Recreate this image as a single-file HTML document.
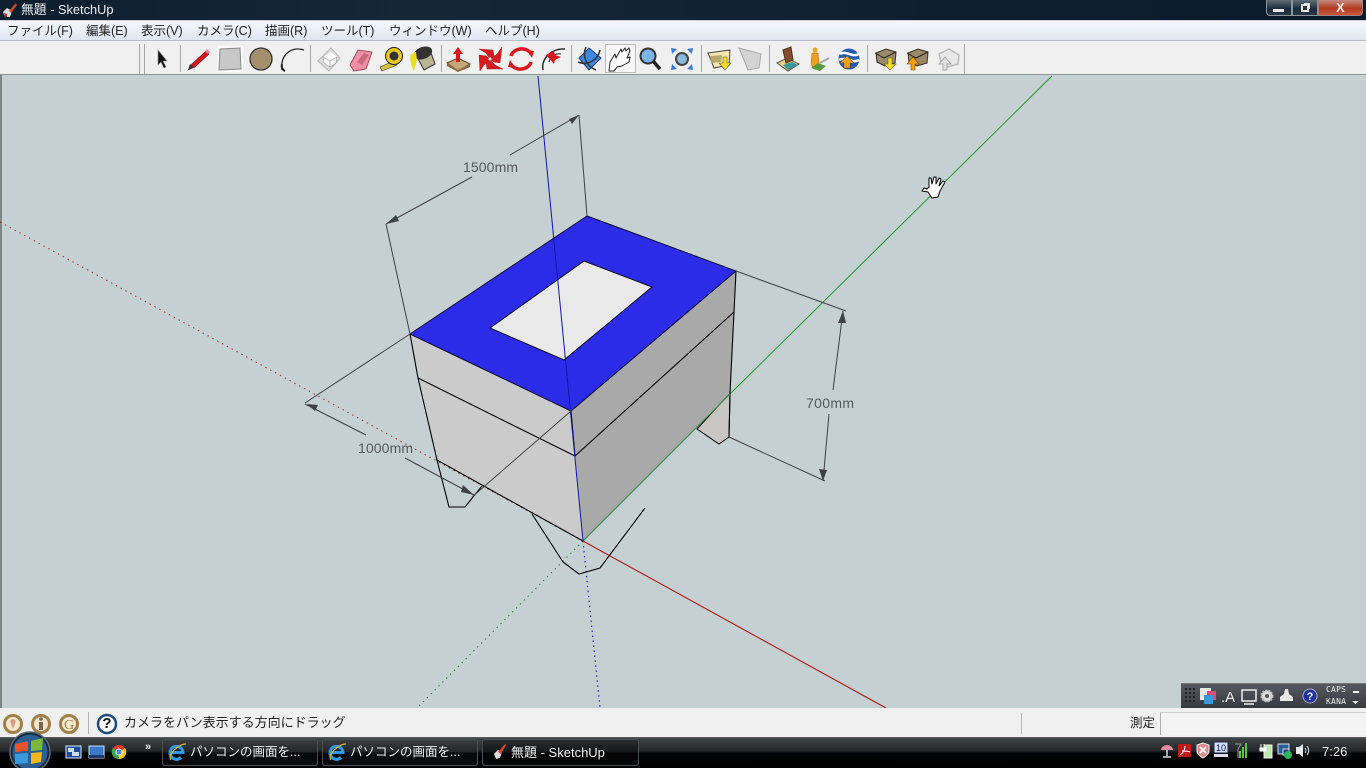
<!DOCTYPE html>
<html lang="ja"><head><meta charset="utf-8"><title>無題 - SketchUp</title>
<style>
html,body{margin:0;padding:0;width:1366px;height:768px;overflow:hidden;background:#c4d0d2}
body{position:relative;font-family:"Liberation Sans","Noto Sans CJK JP",sans-serif}
.a{position:absolute;white-space:nowrap}
#title{left:0;top:0;width:1366px;height:20px;background:linear-gradient(90deg,#0d1e2e,#14283a 30%,#0f2132 60%,#0c1b2a)}
#menu{left:0;top:20px;width:1366px;height:21px;background:linear-gradient(#f4f7fc,#dfe6f2);border-top:1px solid #c9d0d8;box-sizing:border-box;border-bottom:1px solid #b9bcc0}
#tb{left:0;top:41px;width:1366px;height:34px;background:#f0f0f0;border-bottom:1px solid #8f9494;box-sizing:border-box}
.m{top:23px;font-size:12.5px;line-height:16px;color:#222}
#status{left:0;top:708px;width:1366px;height:29px;background:#f0f0f0}
#task{left:0;top:737px;width:1366px;height:31px;background:linear-gradient(#5e6468 0,#3c4144 6%,#24282a 45%,#030405 52%,#000 100%)}
.btn{top:739px;width:156px;height:27px;box-sizing:border-box;border:1px solid #4a4f52;border-radius:3px;background:linear-gradient(#3a3e40,#232628 48%,#08090a 52%,#0b0c0d);color:#f2f2f2;font-size:12.5px;line-height:25px;padding-left:27px}
svg{position:absolute;overflow:visible}
.dim{font:14px "Liberation Sans",sans-serif;fill:#555a5e}
</style></head><body>

<!-- drawing -->
<svg class="a" style="left:0;top:0" width="1366" height="768" viewBox="0 0 1366 768">
<rect x="0" y="75" width="1366" height="633" fill="#c4d0d2"/>
<rect x="0" y="75" width="2" height="633" fill="#7d8585"/>
<!-- dotted axes -->
<path d="M0 222L583 541" stroke="#a02a2a" stroke-width="1" stroke-dasharray="1.5 4" fill="none"/>
<path d="M583 541L417 708" stroke="#2f7a3a" stroke-width="1" stroke-dasharray="1.5 4" fill="none"/>
<path d="M583 541L600 708" stroke="#2222c0" stroke-width="1.2" stroke-dasharray="1.5 3.5" fill="none"/>
<!-- solid axes -->
<path d="M583 541L886 708" stroke="#b01818" stroke-width="1.1" fill="none"/>
<path d="M730 394L1052 76" stroke="#1f9a2c" stroke-width="1" fill="none"/>
<!-- right foot -->
<path d="M697 429L719 444L729 437L730 393Z" fill="#c8c5c3" stroke="#000" stroke-width="1"/>
<!-- faces -->
<path d="M410 334L571 411L583 541L437 460Z" fill="#cbcbcb"/>
<path d="M571 411L736 271L730 393L583 541Z" fill="#a9a9a9"/>
<path d="M587 216L736 271L571 411L410 334Z" fill="#2c2ce8" stroke="#0a0a30" stroke-width="1"/>
<path d="M584 261L652 287L564 360L490 328Z" fill="#e9e9e9" stroke="#0a0a20" stroke-width="1"/>
<!-- edges -->
<g fill="none" stroke="#000" stroke-width="1.1">
<path d="M410 334L418 378L437 460L449 507L465 507L482 486"/>
<path d="M437 460L583 541"/>
<path d="M418 378L575 456L734 312"/>
<path d="M736 271L734 312L730 393L729 437"/>
<path d="M532 514L563 562L579 574L600 568L645 508"/>
<path d="M571 411L575 456"/>
</g>
<path d="M583 541L730 394" stroke="#3f8a4a" stroke-width="1.2" fill="none"/>
<!-- blue axis -->
<path d="M538 76L583 541" stroke="#1414b0" stroke-width="1" fill="none"/>
<!-- dimensions -->
<g fill="none" stroke="#3c4144" stroke-width="1">
<path d="M579 115L587 216"/><path d="M386 224L410 334"/>
<path d="M386 224L472 177M510 155L579 115"/>
<path d="M410 334L305 403"/>
<path d="M305 404L366 435M405 458L474 495"/>
<path d="M472 497L571 411"/>
<path d="M736 271L846 311"/><path d="M729 437L825 481"/>
<path d="M843 311L833 390M829 414L823 481"/>
</g>
<g fill="#3c4144">
<path d="M386 224L396 215L399 221Z"/><path d="M579 115L569 119L572 124Z"/>
<path d="M307 404L318 405L315 411Z"/><path d="M474 495L463 485L461 492Z"/>
<path d="M843 311L838 323L846 323Z"/><path d="M823 481L819 469L827 470Z"/>
</g>
<text class="dim" x="463" y="172" textLength="55">1500mm</text>
<text class="dim" x="358" y="453" textLength="55">1000mm</text>
<text class="dim" x="806" y="408" textLength="48">700mm</text>
<!-- hand cursor -->
<path d="M922 191l6 1 4 6 6-1 2-6 5-9-2-1-4 5 2-7-2-1-3 6 0-7-2 0-2 7-1-6-2 0 0 9-2 2-3-1Z" fill="#fff" stroke="#000" stroke-width="1" stroke-linejoin="round"/>
</svg>

<!-- title bar -->
<div id="title" class="a"></div>
<svg class="a" style="left:2px;top:2px" width="16" height="16" viewBox="0 0 16 16"><path d="M1 10l4-4 5 3-2 6-5 0Z" fill="#ddd"/><path d="M7 9L14 1l1 2-6 8Z" fill="#d8452a"/><path d="M2 11l3 1 0 3-2 0Z" fill="#a33"/></svg>
<div class="a" style="left:21px;top:2px;font-size:12.8px;line-height:16px;color:#eef2f6">無題 - SketchUp</div>
<div class="a" style="left:1266px;top:0;width:26px;height:16px;box-sizing:border-box;border:1px solid #8a949c;border-top:0;border-radius:0 0 0 4px;background:linear-gradient(#5f6d78,#1a2a38 60%,#2a3a48)"></div>
<div class="a" style="left:1273px;top:9px;width:11px;height:3px;background:#e8e8e8"></div>
<div class="a" style="left:1292px;top:0;width:26px;height:16px;box-sizing:border-box;border:1px solid #8a949c;border-top:0;background:linear-gradient(#5f6d78,#1a2a38 60%,#2a3a48)"></div>
<div class="a" style="left:1301px;top:4px;width:8px;height:8px;box-sizing:border-box;border:2px solid #eee;box-shadow:2px -2px 0 -1px #ddd"></div>
<div class="a" style="left:1318px;top:0;width:45px;height:16px;box-sizing:border-box;border:1px solid #a08080;border-top:0;border-radius:0 0 4px 0;background:linear-gradient(#c28a80,#b33a20 55%,#c85a40)"></div>
<div class="a" style="left:1336px;top:1px;font:bold 13px/14px 'Liberation Sans',sans-serif;color:#f0f0f0">X</div>

<!-- menu -->
<div id="menu" class="a"></div>
<div class="a m" style="left:7px">ファイル(F)</div>
<div class="a m" style="left:86px">編集(E)</div>
<div class="a m" style="left:141px">表示(V)</div>
<div class="a m" style="left:197px">カメラ(C)</div>
<div class="a m" style="left:265px">描画(R)</div>
<div class="a m" style="left:321px">ツール(T)</div>
<div class="a m" style="left:389px">ウィンドウ(W)</div>
<div class="a m" style="left:485px">ヘルプ(H)</div>

<!-- toolbar -->
<div id="tb" class="a"></div>
<svg class="a" style="left:0;top:41px" width="1000" height="34" viewBox="0 41 1000 34">
<g stroke="#a8a8a8" stroke-width="1" fill="none">
<path d="M139.500 44V74M144.500 44V74M180.500 45V72M310.500 45V72M441.500 45V72M571.500 45V72M701.500 45V72M769.500 45V72M867.500 45V72M964.500 44V74"/>
</g>
<!-- arrow -->
<path d="M158 50v15l3-3 3 6 2-1-3-6h4Z" fill="#111" stroke="#888" stroke-width=".6"/>
<!-- pencil -->
<path d="M188 70l4-6 14-13 3 3-14 13Z" fill="#d8141c" stroke="#611" stroke-width=".6"/><path d="M205 51l2-2 3 3-2 2Z" fill="#e880a0"/><path d="M188 70l2-6 4 3Z" fill="#333"/>
<!-- rect -->
<rect x="217" y="46" width="26" height="26" fill="#fafafa"/><path d="M220 49L240 48 241 69 219 70Z" fill="#c8c8c8" stroke="#888"/>
<!-- circle -->
<circle cx="261" cy="59" r="11" fill="#a68f6d" stroke="#333" stroke-width="1.3"/>
<!-- arc -->
<path d="M304 50C292 46 280 54 282 70" fill="none" stroke="#222" stroke-width="1.3"/><path d="M282 64C281 68 283 70 285 71" fill="none" stroke="#222" stroke-width="2"/>
<!-- box -->
<path d="M318 61L331 48 340 58 329 71Z" fill="#ddd" stroke="#bbb" stroke-width="1.2"/><path d="M323 57L331 52 337 57 330 61Z" fill="#fff"/><path d="M323 57L330 61 330 67 324 63Z" fill="#fff" stroke="#999" stroke-width=".6"/><path d="M330 61L337 57 336 63 330 67Z" fill="#f6f6f6" stroke="#999" stroke-width=".6"/>
<!-- eraser -->
<path d="M350 65L358 50 372 52 366 69 354 71Z" fill="#ef8fa8" stroke="#a05060"/><path d="M357 62L364 53 369 55 362 65Z" fill="#c86a80"/>
<!-- tape -->
<path d="M380 67L396 60 397 65 382 71Z" fill="#d9c23c" stroke="#333" stroke-width=".6"/><circle cx="394" cy="56" r="8.500" fill="#e8c81e" stroke="#222"/><circle cx="394" cy="56" r="4.500" fill="#333"/>
<!-- paint -->
<path d="M416 55L430 50 435 64 424 70Z" fill="#b8b494" stroke="#333"/><ellipse cx="423" cy="53" rx="9" ry="5.500" fill="#333" stroke="#333" transform="rotate(-20 423 53)"/><path d="M411 54C409 60 412 68 414 71L417 60 416 52Z" fill="#e8e020"/>
<!-- push pull -->
<path d="M447 63L458 58 470 64 458 71Z" fill="#c9a878" stroke="#543"/><path d="M447 63V66L458 72 470 67V64L458 70Z" fill="#8a6a40"/><path d="M458 47l-5 7h3v8h4v-8h3Z" fill="#d81818"/>
<!-- move -->
<g fill="#d81a20" stroke="#8a1010" stroke-width=".4"><path d="M490 59L486 53 479 49 493 50 494 56Z"/><path d="M490 59L497 54 502 47 500 63 494 62Z"/><path d="M490 59L495 65 503 69 487 69 486 63Z"/><path d="M490 59L484 65 480 71 479 55 486 56Z"/></g><circle cx="490" cy="59" r="1.500" fill="#f0f0f0"/>
<!-- rotate -->
<path d="M511 56C513 48 527 46 531 54" fill="none" stroke="#d81a20" stroke-width="3.500"/><path d="M531 62C529 70 515 72 511 64" fill="none" stroke="#d81a20" stroke-width="3.500"/><path d="M527 50l7 1-2 7ZM515 68l-7-1 2-7Z" fill="#d81a20"/>
<!-- offset -->
<path d="M543 70C541 58 552 48 565 49" fill="none" stroke="#222" stroke-width="1.400"/><path d="M549 62C550 56 556 53 561 54" fill="none" stroke="#222"/><path d="M546 55l8-4 1 4 6 2-6 3-1 4Z" fill="#d81a20"/>
<!-- orbit -->
<path d="M579 58L589 48 601 58 589 70Z" fill="#3a8ae0" stroke="#1a3a70"/><path d="M578 62C588 66 598 60 600 50" fill="none" stroke="#333" stroke-width="1.500"/><path d="M586 47C582 56 586 66 596 70" fill="none" stroke="#333" stroke-width="1.500"/>
<!-- pan hand active -->
<rect x="605.500" y="44.500" width="30" height="28" fill="#f8f8f8" stroke="#bbb"/>
<path d="M609 71l1-9 5-8 1 4 5-9 1 3 3-4 1 3 3-3 1 3-3 7 3-1-1 5-7 4-5 1-3 4Z" fill="#fff" stroke="#222" stroke-linejoin="round"/>
<!-- zoom -->
<circle cx="648" cy="56" r="7.500" fill="#7ab4e8" stroke="#333" stroke-width="2"/><path d="M653 61L660 69" stroke="#222" stroke-width="3.500"/>
<!-- zoom extents -->
<circle cx="682" cy="59" r="6" fill="#8ab8d8" stroke="#444" stroke-width="2"/><path d="M671 48l6 1-5 5ZM693 48l-6 1 5 5ZM671 70l6-1-5-5ZM693 70l-6-1 5-5Z" fill="#3a7ad0"/>
<!-- prev / next scene -->
<path d="M708 53L730 50 729 65 714 68Z" fill="#f4e8b0" stroke="#444"/><path d="M710 56L722 55 721 62 711 63Z" fill="#b8a870"/><path d="M723 57v6h-4l6 7 6-7h-4v-6Z" fill="#f0e020" stroke="#654" stroke-width=".6"/>
<path d="M739 48L761 54 759 68 748 70Z" fill="#d4d4d4" stroke="#aaa"/>
<!-- warehouse -->
<path d="M777 63L787 58 799 64 788 71Z" fill="#e8d080" stroke="#555"/><path d="M783 50L791 47 793 60 786 63Z" fill="#8a4a30" stroke="#431"/><path d="M783 65L792 62 798 65 788 70Z" fill="#3a9a9a"/>
<!-- 3d warehouse person -->
<ellipse cx="815" cy="50" rx="2.500" ry="2.500" fill="#f0a020"/><path d="M812 53h6l1 10-2 5h-4l-2-5Z" fill="#f0a020" stroke="#a60" stroke-width=".5"/><path d="M811 68L820 71 826 66 818 63Z" fill="#5a9a3a"/><path d="M820 63L829 58" stroke="#aaa" stroke-width="2"/>
<!-- earth -->
<circle cx="849" cy="59" r="10.500" fill="#2a5ab0"/><path d="M840 54C846 50 852 58 859 54M839 60C846 56 852 64 859 60" stroke="#fff" stroke-width="2.500" fill="none"/><path d="M844 68v-5h-4l7-7 7 7h-4v5Z" fill="#f0a010" stroke="#840" stroke-width=".5"/>
<!-- boxes -->
<path d="M876 53L886 49 896 52 895 63 885 66 877 62Z" fill="#9a8a68" stroke="#332"/><path d="M875 53L884 58 896 52" fill="none" stroke="#222"/><path d="M888 58v6h-4l6 6 6-6h-4v-6Z" fill="#f0e020" stroke="#654" stroke-width=".6"/>
<path d="M908 53L918 49 928 52 927 63 917 66 909 62Z" fill="#9a8a68" stroke="#332"/><path d="M907 53L916 58 928 52" fill="none" stroke="#222"/><path d="M911 70v-6h-4l6-7 6 7h-4v6Z" fill="#f0a010" stroke="#840" stroke-width=".6"/>
<path d="M939 54L949 49 959 55 958 64 948 67 941 62Z" fill="#e8e8e8" stroke="#bbb" stroke-width="1.500"/><path d="M943 70v-6h-4l6-7 6 7h-4v6Z" fill="#e0e0e0" stroke="#aaa"/>
</svg>

<!-- floating tray -->
<div class="a" style="left:1181px;top:683px;width:185px;height:26px;background:linear-gradient(#565a60,#34383e);border-top:1px solid #777"></div>
<svg class="a" style="left:1181px;top:683px" width="185" height="26" viewBox="1181 683 185 26">
<g fill="#222"><rect x="1185" y="688" width="2" height="2"/><rect x="1189" y="688" width="2" height="2"/><rect x="1193" y="688" width="2" height="2"/><rect x="1185" y="692" width="2" height="2"/><rect x="1189" y="692" width="2" height="2"/><rect x="1193" y="692" width="2" height="2"/><rect x="1185" y="696" width="2" height="2"/><rect x="1189" y="696" width="2" height="2"/><rect x="1193" y="696" width="2" height="2"/><rect x="1185" y="700" width="2" height="2"/><rect x="1189" y="700" width="2" height="2"/><rect x="1193" y="700" width="2" height="2"/></g>
<rect x="1200" y="688" width="11" height="12" fill="#e8e8e8"/><rect x="1207" y="691" width="9" height="9" fill="#e04a80"/><rect x="1204" y="695" width="9" height="9" fill="#3a9ad8"/>
<text x="1221" y="702" font-family="Liberation Sans,sans-serif" font-size="15" fill="#eee">.A</text>
<rect x="1242" y="690" width="14" height="11" fill="none" stroke="#eee" stroke-width="1.500"/><path d="M1244 704h10" stroke="#eee" stroke-width="1.500"/>
<circle cx="1267" cy="696" r="5.500" fill="#ddd" stroke="#bbb" stroke-width="2" stroke-dasharray="2 1"/><circle cx="1267" cy="696" r="2" fill="#555"/>
<path d="M1285 689h3l1 5 4 3v4h-13v-4l4-3Z" fill="#e8e8e8"/>
<circle cx="1310" cy="696" r="7" fill="#2030a0" stroke="#aab" stroke-width="1"/>
<text x="1310" y="700" text-anchor="middle" font-family="Liberation Sans,sans-serif" font-size="11" font-weight="bold" fill="#fff">?</text>
<text x="1326" y="692" font-family="DejaVu Sans Mono,monospace" font-size="8" fill="#eee" textLength="20">CAPS</text>
<text x="1326" y="704" font-family="DejaVu Sans Mono,monospace" font-size="8" fill="#eee" textLength="20">KANA</text>
<rect x="1353" y="691" width="6" height="2" fill="#eee"/><path d="M1352 701h7l-3.500 3Z" fill="#eee"/>
</svg>

<!-- status -->
<div id="status" class="a"></div>
<svg class="a" style="left:0;top:708px" width="120" height="29" viewBox="0 708 120 29">
<g fill="#f4e6cc" stroke="#a08048" stroke-width="3"><circle cx="13" cy="724" r="8.500"/><circle cx="41" cy="724" r="8.500"/><circle cx="69" cy="724" r="8.500"/></g>
<path d="M13 719a2.500 2.500 0 0 1 2.500 3l-2.500 7-2.500-7a2.500 2.500 0 0 1 2.500-3Z" fill="#d89a80"/>
<circle cx="41" cy="719" r="1.800" fill="#765"/><path d="M39 722h4v8h-4Z" fill="#765"/>
<text x="69" y="729" text-anchor="middle" font-family="Liberation Serif,serif" font-size="14" fill="#a08048">G</text>
<path d="M88.500 712V734" stroke="#b5b5b5"/>
<circle cx="107" cy="724" r="9" fill="#fff" stroke="#1a4a80" stroke-width="2.500"/>
</svg>
<div class="a" style="left:101px;top:715px;width:12px;text-align:center;font:bold 15px/18px 'Liberation Sans',sans-serif;color:#111">?</div>
<div class="a" style="left:124px;top:715px;font-size:13px;line-height:16px;color:#222">カメラをパン表示する方向にドラッグ</div>
<div class="a" style="left:1021px;top:713px;width:1px;height:21px;background:#bbb"></div>
<div class="a" style="left:1130px;top:716px;font-size:12.500px;line-height:15px;color:#222">測定</div>
<div class="a" style="left:1160px;top:712px;width:206px;height:23px;background:#f4f4f4;border-left:1px solid #b0b0b0;border-top:1px solid #d0d0d0;box-sizing:border-box"></div>

<!-- taskbar -->
<div id="task" class="a"></div>
<div class="a btn" style="left:162px">パソコンの画面を...</div>
<div class="a btn" style="left:322px">パソコンの画面を...</div>
<div class="a btn" style="left:482px;width:157px;padding-left:28px;font-size:13px;background:linear-gradient(#2a2d2f,#141617 48%,#040405 52%,#080808)">無題 - SketchUp</div>
<svg class="a" style="left:0;top:732px" width="660" height="36" viewBox="0 732 660 36">
<circle cx="30" cy="752" r="20" fill="#18283a" stroke="#5a6a78" stroke-width="1.500"/>
<circle cx="30" cy="752" r="17.500" fill="#2a5f92"/>
<path d="M15 744l13-3 0 10-13 1Z" fill="#e8522a"/><path d="M31 741l12-3-1 12-11 1Z" fill="#7ab83a"/><path d="M15 754l13-1 0 10-13 1Z" fill="#3a9ae0"/><path d="M31 753l11-1-1 10-10 2Z" fill="#f4b81e"/>
<rect x="66" y="746" width="15" height="12" fill="#1d4a9a" stroke="#dfe8f4"/><rect x="68" y="748" width="6" height="4" fill="#cde"/><rect x="72" y="752" width="7" height="4" fill="#cde"/>
<rect x="89" y="746" width="15" height="12" fill="#3a7ac8" stroke="#cde"/><rect x="89" y="755" width="15" height="3" fill="#1a3a70"/>
<circle cx="119" cy="752" r="7" fill="#e03a2a"/><path d="M119 752L125 748A7 7 0 0 1 119 759Z" fill="#f4c81e"/><path d="M119 752L119 759A7 7 0 0 1 113 748Z" fill="#3aa84a"/><circle cx="119" cy="752" r="3" fill="#3a8ae0" stroke="#fff"/>
<text x="145" y="750" font-family="Liberation Sans,sans-serif" font-size="11" font-weight="bold" fill="#eee">»</text>
<path d="M172 752.500h12a6.500 6.500 0 1 0-2 5" transform="translate(-1,0)" fill="none" stroke="#2a9ae8" stroke-width="3"/><path d="M171 760C167 755 178 744 186 744" fill="none" stroke="#e0b030" stroke-width="1.200"/>
<path d="M332 752.500h12a6.500 6.500 0 1 0-2 5" transform="translate(-1,0)" fill="none" stroke="#2a9ae8" stroke-width="3"/><path d="M331 760C327 755 338 744 346 744" fill="none" stroke="#e0b030" stroke-width="1.200"/>
<path d="M494 754l4-4 4 2-2 6-4 1Z" fill="#ddd"/><path d="M498 752l7-8 1 1-5 9Z" fill="#d8452a"/>
</svg>
<svg class="a" style="left:1150px;top:737px" width="216" height="31" viewBox="1150 737 216 31">
<path d="M1161 750a6 5 0 0 1 12 0Z" fill="#e08a9a"/><path d="M1167 750v6M1163 757h8" stroke="#ddd" stroke-width="1.500"/>
<rect x="1178" y="744" width="13" height="13" fill="#c01818"/><path d="M1180 755c3-2 5-5 5-9M1182 751c3 0 6 0 8 1" stroke="#fff" fill="none"/>
<path d="M1197 745l6-2 6 2v6c0 3-3 5-6 7-3-2-6-4-6-7Z" fill="#d88a8a" stroke="#eee"/><path d="M1200 747l6 6M1206 747l-6 6" stroke="#fff" stroke-width="1.800"/>
<rect x="1214" y="742" width="14" height="11" fill="#cfe0f8" stroke="#224"/><rect x="1214" y="754" width="14" height="3" fill="#dde"/>
<text x="1221" y="751" text-anchor="middle" font-family="Liberation Sans,sans-serif" font-size="9" fill="#115">10</text>
<path d="M1235 744l6 0-3 5v9" stroke="#999" fill="none"/>
<rect x="1239" y="751" width="2" height="7" fill="#5ac83a"/><rect x="1242" y="747" width="2" height="11" fill="#5ac83a"/><rect x="1245" y="743" width="2" height="15" fill="#5ac83a"/>
<rect x="1264" y="745" width="8" height="13" fill="#bfe8b0" stroke="#eee"/><path d="M1261 744v4M1264 744v4M1260 748h6v3h-6Z" stroke="#fff" fill="#fff"/>
<rect x="1278" y="744" width="11" height="10" fill="#2a5a9a" stroke="#dde"/><rect x="1283" y="749" width="6" height="6" fill="#1a3a70" stroke="#dde"/><circle cx="1288" cy="755" r="4" fill="#2ab85a"/>
<path d="M1296 747h3l4-3v13l-4-3h-3Z" fill="#e8e8e8"/><path d="M1305 748a4 4 0 0 1 0 5M1307 746a7 7 0 0 1 0 9" stroke="#cde" fill="none"/>
</svg>
<div class="a" style="left:1322px;top:744px;font-size:13px;line-height:16px;color:#f0f0f0">7:26</div>
</body></html>
